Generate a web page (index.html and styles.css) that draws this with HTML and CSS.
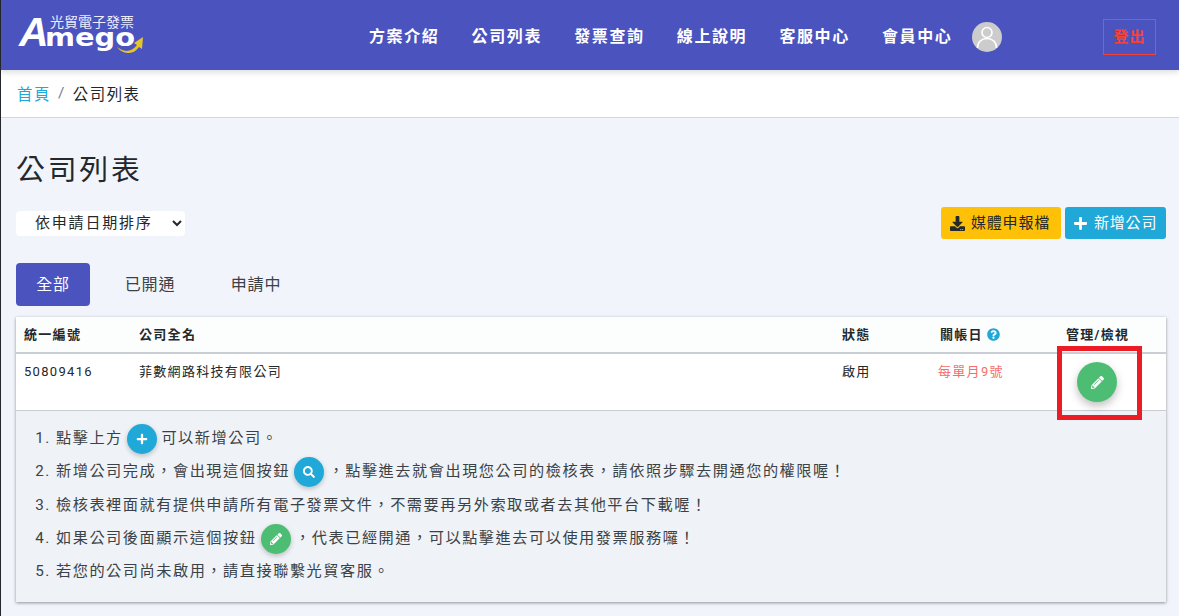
FILE: index.html
```html
<!DOCTYPE html>
<html lang="zh-Hant">
<head>
    <meta charset="UTF-8" />
    <meta name="viewport" content="width=device-width, initial-scale=1.0" />
    <title>公司列表</title>
    <link rel="stylesheet" href="styles.css">
</head>
<body>
    <svg class="icon-defs" aria-hidden="true">
        <symbol id="i-plus" viewBox="0 0 448 512"><path d="M416 208H272V64c0-17.67-14.33-32-32-32h-32c-17.67 0-32 14.33-32 32v144H32c-17.67 0-32 14.33-32 32v32c0 17.67 14.33 32 32 32h144v144c0 17.67 14.33 32 32 32h32c17.67 0 32-14.33 32-32V304h144c17.67 0 32-14.33 32-32v-32c0-17.67-14.33-32-32-32z"/></symbol>
        <symbol id="i-search" viewBox="0 0 512 512"><path d="M505 442.7L405.3 343c-4.5-4.5-10.6-7-17-7H372c27.6-35.3 44-79.7 44-128C416 93.1 322.9 0 208 0S0 93.1 0 208s93.1 208 208 208c48.3 0 92.7-16.4 128-44v16.3c0 6.4 2.5 12.5 7 17l99.7 99.7c9.4 9.4 24.6 9.4 33.9 0l28.3-28.3c9.4-9.4 9.4-24.6.1-34zM208 336c-70.7 0-128-57.2-128-128 0-70.7 57.2-128 128-128 70.7 0 128 57.2 128 128 0 70.7-57.2 128-128 128z"/></symbol>
        <symbol id="i-pencil" viewBox="0 0 512 512"><path d="M497.9 142.1l-46.1 46.1c-4.7 4.7-12.3 4.7-17 0l-111-111c-4.7-4.7-4.7-12.3 0-17l46.1-46.1c18.7-18.7 49.1-18.7 67.9 0l60.1 60.1c18.8 18.7 18.8 49.1 0 67.9zM284.2 99.8L21.6 362.4.4 483.9c-2.9 16.4 11.4 30.6 27.8 27.8l121.5-21.3 262.6-262.6c4.7-4.7 4.7-12.3 0-17l-111-111c-4.8-4.7-12.4-4.7-17.1 0zM124.1 339.9c-5.5-5.5-5.5-14.3 0-19.8l154-154c5.5-5.5 14.3-5.5 19.8 0s5.5 14.3 0 19.8l-154 154c-5.5 5.5-14.3 5.5-19.8 0zM88 424h48v36.3l-64.5 11.3-31.1-31.1L51.7 376H88v48z"/></symbol>
        <symbol id="i-download" viewBox="0 0 512 512"><path d="M216 0h80c13.3 0 24 10.7 24 24v168h87.7c17.8 0 26.7 21.5 14.1 34.1L269.7 378.3c-7.5 7.5-19.8 7.5-27.3 0L90.1 226.1c-12.6-12.6-3.7-34.1 14.1-34.1H192V24c0-13.3 10.7-24 24-24zm296 376v112c0 13.3-10.7 24-24 24H24c-13.3 0-24-10.7-24-24V376c0-13.3 10.7-24 24-24h146.7l49 49c20.1 20.1 52.5 20.1 72.6 0l49-49H488c13.3 0 24 10.7 24 24zm-124 88c0-11-9-20-20-20s-20 9-20 20 9 20 20 20 20-9 20-20zm64 0c0-11-9-20-20-20s-20 9-20 20 9 20 20 20 20-9 20-20z"/></symbol>
        <symbol id="i-question" viewBox="0 0 512 512"><path d="M504 256c0 136.997-111.043 248-248 248S8 392.997 8 256C8 119.083 119.043 8 256 8s248 111.083 248 248zM262.655 90c-54.497 0-89.255 22.957-116.549 63.758-3.536 5.286-2.353 12.415 2.715 16.258l34.699 26.31c5.205 3.947 12.621 3.008 16.665-2.122 17.864-22.658 30.113-35.797 57.303-35.797 20.429 0 45.698 13.148 45.698 32.958 0 14.976-12.363 22.667-32.534 33.976C247.128 238.528 216 254.941 216 296v4c0 6.627 5.373 12 12 12h56c6.627 0 12-5.373 12-12v-1.333c0-28.462 83.186-29.647 83.186-106.667 0-58.002-60.165-102-116.531-102zM256 338c-25.365 0-46 20.635-46 46 0 25.364 20.635 46 46 46s46-20.636 46-46c0-25.365-20.635-46-46-46z"/></symbol>
    </svg>

    <!-- Top bar -->
    <header class="topbar">
        <a class="logo" href="#">
            <span class="logo-sub">光貿電子發票</span>
            <span class="logo-a">A</span>
            <span class="logo-word">mego</span>
            <svg class="logo-arrow" viewBox="0 0 26 16"><path d="M0 10C6 15 14 16 20 8L17 6 26 0 25 12 22 10C16 19 5 17 0 10z"/></svg>
        </a>
        <nav class="main-nav">
            <a href="#">方案介紹</a>
            <a href="#">公司列表</a>
            <a href="#">發票查詢</a>
            <a href="#">線上說明</a>
            <a href="#">客服中心</a>
            <a href="#">會員中心</a>
            <svg class="avatar" viewBox="0 0 30 30">
                <circle cx="15" cy="15" r="15" fill="#ccc"/>
                <circle cx="15" cy="10.5" r="5" fill="none" stroke="#fff" stroke-width="1.6"/>
                <path d="M5.5 26c0-6 4-9.5 9.500-9.500s9.500 3.500 9.500 9.500" fill="none" stroke="#fff" stroke-width="1.6"/>
            </svg>
        </nav>
        <a class="logout" href="#">登出</a>
    </header>

    <!-- Breadcrumb -->
    <div class="crumbs">
        <a href="#">首頁</a>
        <span class="crumb-sep">/</span>
        <span>公司列表</span>
    </div>

    <main class="page">
        <h1>公司列表</h1>

        <div class="toolbar">
            <select class="sort-select">
                <option>依申請日期排序</option>
                <option>依公司名稱排序</option>
            </select>
            <div class="toolbar-btns">
                <a class="btn btn-yellow" href="#"><svg class="btn-icon"><use href="#i-download"/></svg>媒體申報檔</a>
                <a class="btn btn-blue" href="#"><svg class="btn-icon"><use href="#i-plus"/></svg>新增公司</a>
            </div>
        </div>

        <div class="tabs">
            <a class="tab active" href="#">全部</a>
            <a class="tab" href="#">已開通</a>
            <a class="tab" href="#">申請中</a>
        </div>

        <div class="card">
            <table class="company-table">
                <thead>
                    <tr>
                        <th class="col-id">統一編號</th>
                        <th class="col-name">公司全名</th>
                        <th class="col-status">狀態</th>
                        <th class="col-date">關帳日 <svg class="help-icon"><use href="#i-question"/></svg></th>
                        <th>管理/檢視</th>
                    </tr>
                </thead>
                <tbody>
                    <tr>
                        <td>50809416</td>
                        <td>菲數網路科技有限公司</td>
                        <td>啟用</td>
                        <td class="date-cell">每單月9號</td>
                        <td class="manage-cell">
                            <a class="round-btn round-green round-lg" href="#"><svg><use href="#i-pencil"/></svg></a>
                            <span class="highlight"></span>
                        </td>
                    </tr>
                </tbody>
            </table>

            <ol class="notes">
                <li>點擊上方 <span class="round-btn round-blue"><svg><use href="#i-plus"/></svg></span> 可以新增公司。</li>
                <li>新增公司完成，會出現這個按鈕 <span class="round-btn round-blue"><svg><use href="#i-search"/></svg></span> ，點擊進去就會出現您公司的檢核表，請依照步驟去開通您的權限喔！</li>
                <li>檢核表裡面就有提供申請所有電子發票文件，不需要再另外索取或者去其他平台下載喔！</li>
                <li>如果公司後面顯示這個按鈕 <span class="round-btn round-green"><svg><use href="#i-pencil"/></svg></span> ，代表已經開通，可以點擊進去可以使用發票服務囉！</li>
                <li>若您的公司尚未啟用，請直接聯繫光貿客服。</li>
            </ol>
        </div>
    </main>
</body>
</html>
```

FILE: styles.css
```css
html, body {
    margin: 0;
    padding: 0;
    height: 100%;
}

body {
    background-color: #f1f4fa;
    color: #212529;
    font-family: 'Roboto', 'Noto Sans CJK TC', sans-serif;
    font-size: 14px;
    overflow: hidden;
    border-left: 1px solid #23272b;
    box-sizing: border-box;
}

a {
    text-decoration: none;
    color: inherit;
}

.icon-defs {
    display: none;
}

/* Top bar */
.topbar {
    height: 70px;
    margin-left: -1px;
    background-color: #4b53bf;
    box-shadow: 0 2px 6px rgba(0, 0, 0, 0.15);
    position: relative;
    display: flex;
    align-items: center;
}

.logo {
    position: relative;
    width: 145px;
    height: 56px;
    margin-left: 19px;
    margin-top: -2px;
    color: #fff;
    display: block;
}

.logo-sub {
    position: absolute;
    left: 31px;
    top: 9px;
    font-size: 14px;
    line-height: 15px;
    white-space: nowrap;
    color: #eceeff;
}

.logo-a {
    position: absolute;
    left: 0;
    top: 4px;
    font-family: 'Liberation Sans', sans-serif;
    font-weight: 700;
    font-style: italic;
    font-size: 41px;
    line-height: 44px;
}

.logo-word {
    position: absolute;
    left: 26px;
    top: 24px;
    font-family: 'DejaVu Sans', sans-serif;
    font-weight: 700;
    font-size: 24px;
    line-height: 16px;
    white-space: nowrap;
    transform: scaleX(1.2);
    transform-origin: left center;
}

.logo-arrow {
    position: absolute;
    left: 98px;
    top: 31px;
    width: 26px;
    height: 16px;
    fill: #e6c52c;
}

.main-nav {
    position: absolute;
    left: 369px;
    top: 0;
    height: 70px;
    display: flex;
    align-items: center;
    gap: 32.2px;
}

.main-nav a {
    color: #fff;
    font-size: 16px;
    font-weight: 700;
    letter-spacing: 1.6px;
}

.avatar {
    width: 30px;
    height: 30px;
    margin-left: -12.5px;
    margin-top: 4px;
}

.logout {
    position: absolute;
    left: 1103px;
    top: 19px;
    width: 53px;
    height: 36px;
    box-sizing: border-box;
    border: 1px solid #f44336;
    padding-bottom: 3px;
    color: #f44336;
    font-size: 15px;
    font-weight: 700;
    letter-spacing: 1px;
    display: flex;
    align-items: center;
    justify-content: center;
}

/* Breadcrumb */
.crumbs {
    height: 48px;
    margin-left: -1px;
    box-sizing: border-box;
    background-color: #fff;
    border-bottom: 1px solid #d0d7de;
    padding: 0 0 2px 17px;
    display: flex;
    align-items: center;
    font-size: 15.4px;
    letter-spacing: 1.54px;
    color: #212529;
}

.crumbs a {
    color: #20a8d8;
}

.crumb-sep {
    color: #73818f;
    margin: 0 7px;
}

/* Page */
.page {
    padding: 0 13px 0 15px;
}

h1 {
    margin: 33px 0 0;
    font-size: 28.8px;
    font-weight: 400;
    line-height: 38px;
    letter-spacing: 2.88px;
    color: #23282c;
}

.toolbar {
    display: flex;
    justify-content: space-between;
    align-items: center;
    margin-top: 18px;
    height: 32px;
}

.sort-select {
    width: 169px;
    height: 25px;
    padding: 0 0 0 15px;
    border: none;
    border-radius: 4px;
    background-color: #fff;
    color: #23282c;
    font-family: inherit;
    font-size: 15px;
    letter-spacing: 1.8px;
}

.toolbar-btns {
    display: flex;
    gap: 4px;
}

.btn {
    width: 120px;
    height: 32px;
    box-sizing: border-box;
    border-radius: 3px;
    padding: 0 0 3px 9px;
    display: flex;
    align-items: center;
    font-size: 15px;
    letter-spacing: 0.8px;
}

.btn-yellow {
    background-color: #ffc107;
    color: #23282c;
}

.btn-blue {
    width: 101px;
    background-color: #20a8d8;
    color: #fff;
}

.btn-icon {
    width: 15px;
    height: 15px;
    margin: 3px 6px 0 0;
    fill: currentColor;
}

.btn-blue .btn-icon {
    width: 13px;
    margin-right: 7px;
}

/* Tabs */
.tabs {
    display: flex;
    margin-top: 24px;
}

.tab {
    height: 43px;
    width: 74px;
    box-sizing: border-box;
    padding-bottom: 3px;
    display: flex;
    align-items: center;
    justify-content: center;
    border-radius: 4px;
    font-size: 16px;
    letter-spacing: 0.8px;
    color: #3a4248;
}

.tab + .tab {
    width: 106px;
}

.tab.active {
    margin-right: 7px;
    background-color: #4b53bf;
    color: #fff;
}

/* Table card */
.card {
    margin-top: 11px;
    background-color: #eff2f6;
    box-shadow: 0 1px 3px rgba(0, 0, 0, 0.4);
}

.company-table {
    width: 100%;
    border-collapse: collapse;
    table-layout: fixed;
    font-size: 13px;
    letter-spacing: 1.3px;
    color: #23282c;
}

.company-table thead {
    background-color: #fcfdfd;
}

.company-table th {
    height: 36px;
    padding: 0 0 2px 8px;
    box-sizing: border-box;
    text-align: left;
    font-weight: 700;
    border-bottom: 2px solid #c8ced3;
}

.col-id { width: 115px; }
.col-name { width: 703px; }
.col-status { width: 98px; }
.col-date { width: 126px; }

.company-table td {
    height: 57px;
    box-sizing: border-box;
    padding: 9px 0 0 8px;
    vertical-align: top;
    background-color: #fff;
    border-bottom: 1px solid #c8ced3;
    line-height: 18px;
}

.company-table td.date-cell {
    padding-left: 6px;
    color: #f86c6b;
}

.company-table td.manage-cell {
    position: relative;
    padding: 8px 0 0 19px;
}

.help-icon {
    width: 13px;
    height: 13px;
    vertical-align: -2px;
    fill: #20a8d8;
}

.highlight {
    position: absolute;
    left: -1px;
    top: -8px;
    width: 85px;
    height: 74px;
    box-sizing: border-box;
    border: 5px solid #ed1c24;
    pointer-events: none;
}

/* Round icon buttons */
.round-btn {
    display: inline-flex;
    align-items: center;
    justify-content: center;
    width: 30px;
    height: 30px;
    border-radius: 50%;
    vertical-align: middle;
    box-shadow: 0 2px 5px rgba(0, 0, 0, 0.22);
}

.round-btn svg {
    width: 12px;
    height: 12px;
    fill: #fff;
}

.round-lg {
    width: 40px;
    height: 40px;
    box-shadow: 0 4px 8px rgba(0, 0, 0, 0.25);
}

.round-lg svg {
    width: 13px;
    height: 13px;
}

.round-green {
    background-color: #4dbd74;
}

.round-blue {
    background-color: #20a8d8;
}

/* Notes */
.notes {
    margin: 0;
    padding: 11.5px 0 14px 40px;
    font-size: 15.2px;
    letter-spacing: 1.52px;
    color: #3a4248;
}

.notes li {
    height: 33.3px;
    line-height: 33px;
}

.notes .round-btn {
    margin: 0 -1px;
}
```
